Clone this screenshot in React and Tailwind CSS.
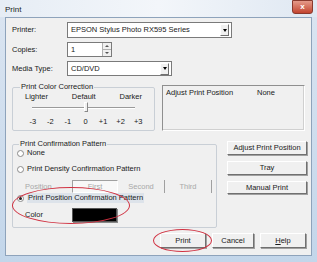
import React from "react";

const font = { fontFamily: '"Liberation Sans", Arial, sans-serif' };

function Btn({ children, className = "" }) {
  return (
    <div
      className={`flex items-center justify-center bg-[#f0f0f0] border border-t-white border-l-white border-r-[#707070] border-b-[#707070] shadow-[1px_1px_0_#a0a0a0] text-[#1a1a1a] ${className}`}
    >
      {children}
    </div>
  );
}

function Radio({ checked }) {
  return (
    <span className="w-[7px] h-[7px] rounded-full border border-[#8a8a8a] bg-white flex items-center justify-center shrink-0">
      {checked && <span className="w-[3px] h-[3px] rounded-full bg-[#222]" />}
    </span>
  );
}

function Arrow() {
  return (
    <span className="w-[9px] h-[12px] bg-[#f0f0f0] border border-t-white border-l-white border-r-[#707070] border-b-[#707070] flex items-center justify-center">
      <span className="w-0 h-0 border-l-[2px] border-r-[2px] border-t-[3px] border-l-transparent border-r-transparent border-t-black" />
    </span>
  );
}

export default function App() {
  const nums = ["-3", "-2", "-1", "0", "+1", "+2", "+3"];
  return (
    <div
      className="w-[317px] h-[262px] flex flex-col bg-gradient-to-b from-[#dbe5f1] to-[#c3d6ea] text-[7.5px] text-[#1a1a1a] overflow-hidden relative"
      style={font}
    >
      {/* title bar */}
      <div className="h-[17px] flex items-start justify-between pl-[5px] pr-[4px] bg-gradient-to-r from-[#e6edf5] via-[#f3f6fa] to-[#dfe8f2]">
        <span className="text-[8px] mt-[4px] text-[#222]">Print</span>
        <div className="w-[21px] h-[14px] rounded-b-[3px] bg-gradient-to-b from-[#e49a8a] to-[#c2432e] border border-[#8a3a2e] flex items-center justify-center text-white text-[8px] font-bold">
          x
        </div>
      </div>

      {/* client */}
      <div className="flex-1 mx-[5px] mb-[6px] bg-[#f0f0f0] border border-[#8ea3bb] flex flex-col pl-[6px] pr-[4px] pt-[4px] relative">
        {/* top rows */}
        <div className="flex items-center h-[16px]">
          <span className="w-[55px]">Printer:</span>
          <div className="w-[165px] h-[16px] bg-white border border-[#7a7a7a] flex items-center justify-between pl-[3px] pr-[2px]">
            <span>EPSON Stylus Photo RX595 Series</span>
            <Arrow />
          </div>
        </div>
        <div className="flex items-center h-[15px] mt-[4px]">
          <span className="w-[55px]">Copies:</span>
          <div className="w-[45px] h-[15px] bg-white border border-[#7a7a7a] flex items-center justify-between pl-[3px]">
            <span>1</span>
            <div className="w-[9px] h-full flex flex-col border-l border-[#b0b0b0] bg-[#f0f0f0]">
              <div className="flex-1 flex items-center justify-center border-b border-[#b0b0b0]">
                <span className="w-0 h-0 border-l-[2px] border-r-[2px] border-b-[2px] border-l-transparent border-r-transparent border-b-[#555]" />
              </div>
              <div className="flex-1 flex items-center justify-center">
                <span className="w-0 h-0 border-l-[2px] border-r-[2px] border-t-[2px] border-l-transparent border-r-transparent border-t-[#555]" />
              </div>
            </div>
          </div>
        </div>
        <div className="flex items-center h-[15px] mt-[4px]">
          <span className="w-[55px]">Media Type:</span>
          <div className="w-[105px] h-[15px] bg-white border border-[#7a7a7a] flex items-center justify-between pl-[3px] pr-[2px]">
            <span>CD/DVD</span>
            <Arrow />
          </div>
        </div>

        {/* color correction + adjust box */}
        <div className="flex mt-[7px] gap-[7px]">
          <fieldset className="w-[143px] h-[48px] border border-[#c9cfd6] rounded-[2px] px-[5px] pb-0">
            <legend className="px-[1px] ml-[2px] leading-[8px]">Print Color Correction</legend>
            <div className="flex justify-between px-[7px] mt-[2px] leading-[8px]">
              <span>Lighter</span>
              <span>Default</span>
              <span>Darker</span>
            </div>
            <div className="relative h-[12px] w-[103px] ml-[14px] mt-[1px]">
              <div className="absolute left-0 right-0 top-[5px] h-[2px] border-t border-b border-t-[#9a9a9a] border-b-white" />
              <div className="absolute left-[52px] top-0 w-[4px] h-[10px] bg-[#f0f0f0] border border-[#888] border-t-white border-l-white" />
            </div>
            <div className="grid grid-cols-7 w-[123px] ml-[6px] mt-[4px] leading-[8px] text-center">
              {nums.map((n) => (
                <span key={n}>{n}</span>
              ))}
            </div>
          </fieldset>
          <div className="w-[143px] h-[46px] mt-[2px] border border-t-[#8f8f8f] border-l-[#8f8f8f] border-r-white border-b-white shadow-[inset_-1px_-1px_0_#d0d0d0] flex items-start pl-[3px] pt-[3px] leading-[8px]">
            <span className="w-[91px]">Adjust Print Position</span>
            <span>None</span>
          </div>
        </div>

        {/* confirmation pattern + buttons */}
        <div className="flex mt-[9px] gap-[10px]">
          <fieldset className="w-[200px] h-[88px] border border-[#c9cfd6] rounded-[2px] px-[4px]">
            <legend className="px-[1px] ml-[2px] leading-[8px]">Print Confirmation Pattern</legend>
            <div className="flex items-center gap-[3px] mt-[1px] leading-[8px]">
              <Radio />
              <span>None</span>
            </div>
            <div className="flex items-center gap-[3px] mt-[8px] leading-[8px]">
              <Radio />
              <span>Print Density Confirmation Pattern</span>
            </div>
            <div className="flex items-center mt-[7px] text-[#a8a8a8]">
              <span className="w-[55px] pl-[8px]">Position</span>
              <div className="w-[46px] h-[13px] flex items-center justify-center bg-[#f8f8f8] border border-t-[#a0a0a0] border-l-[#a0a0a0] border-r-white border-b-white">First</div>
              <div className="w-[47px] h-[13px] flex items-center justify-center border-r border-[#a0a0a0]">Second</div>
              <div className="w-[47px] h-[13px] flex items-center justify-center border-r border-[#a0a0a0]">Third</div>
            </div>
            <div className="flex items-center gap-[3px] mt-0 leading-[8px]">
              <Radio checked />
              <span className="bg-[#dde3ea] px-[1px] py-[1px]">Print Position Confirmation Pattern</span>
            </div>
            <div className="flex items-center mt-[5px]">
              <span className="w-[55px] pl-[8px]">Color</span>
              <div className="w-[45px] h-[14px] bg-black border border-[#555] shadow-[1px_1px_0_#888]" />
            </div>
          </fieldset>
          <div className="flex flex-col gap-[6px] w-[85px] mt-[1px]">
            <Btn className="h-[14px]">Adjust Print Position</Btn>
            <Btn className="h-[14px]">Tray</Btn>
            <Btn className="h-[13px]">Manual Print</Btn>
          </div>
        </div>

        {/* bottom buttons */}
        <div className="flex justify-end gap-[6px] mt-[5px] pr-[1px]">
          <Btn className="w-[46px] h-[15px]">Print</Btn>
          <Btn className="w-[42px] h-[15px]">Cancel</Btn>
          <Btn className="w-[46px] h-[15px]">
            <span className="underline">H</span>elp
          </Btn>
        </div>

        {/* red annotation ellipses */}
        <div className="absolute left-[6px] top-[169px] w-[118px] h-[37px] rounded-[50%] border border-[#d03040]" />
        <div className="absolute left-[147px] top-[211px] w-[59px] h-[23px] rounded-[50%] border border-[#d03040]" />
      </div>
    </div>
  );
}
